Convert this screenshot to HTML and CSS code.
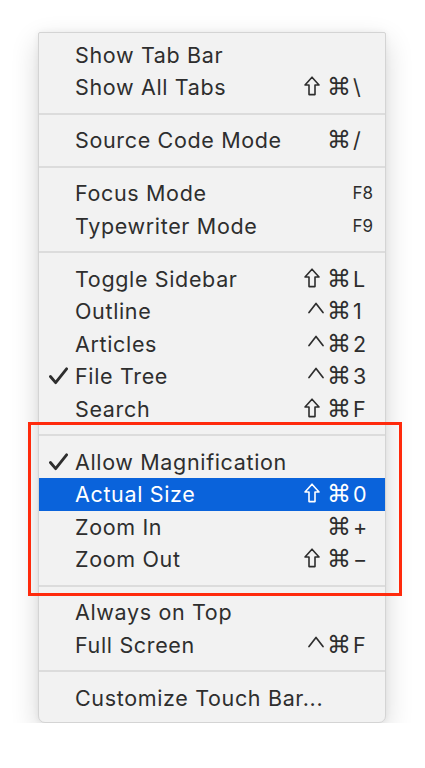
FILE: index.html
```html
<!DOCTYPE html>
<html>
<head>
<meta charset="utf-8">
<link rel="stylesheet" href="styles.css">
</head>
<body>
<div class="menu">
  <div class="row"><span class="label">Show Tab Bar</span></div>
  <div class="row"><span class="label">Show All Tabs</span><span class="sc"><span class="mods"><svg class="shift" viewBox="0 0 16 20"><path d="M8 1.2 L15 9 H11 V18.6 H5 V9 H1 Z" fill="none" stroke="currentColor" stroke-width="1.6" stroke-linejoin="round"/></svg><span class="m">⌘</span></span><span class="key">\</span></span></div>
  <div class="sep"></div>
  <div class="row"><span class="label">Source Code Mode</span><span class="sc"><span class="mods"><span class="m">⌘</span></span><span class="key">/</span></span></div>
  <div class="sep"></div>
  <div class="row"><span class="label">Focus Mode</span><span class="fkey">F8</span></div>
  <div class="row"><span class="label">Typewriter Mode</span><span class="fkey">F9</span></div>
  <div class="sep"></div>
  <div class="row"><span class="label">Toggle Sidebar</span><span class="sc"><span class="mods"><svg class="shift" viewBox="0 0 16 20"><path d="M8 1.2 L15 9 H11 V18.6 H5 V9 H1 Z" fill="none" stroke="currentColor" stroke-width="1.6" stroke-linejoin="round"/></svg><span class="m">⌘</span></span><span class="key">L</span></span></div>
  <div class="row"><span class="label">Outline</span><span class="sc"><span class="mods"><svg class="ctrl" viewBox="0 0 16 20"><path d="M1 12.5 L8 3.5 L15 12.5" fill="none" stroke="currentColor" stroke-width="1.7" stroke-linecap="round" stroke-linejoin="round"/></svg><span class="m">⌘</span></span><span class="key">1</span></span></div>
  <div class="row"><span class="label">Articles</span><span class="sc"><span class="mods"><svg class="ctrl" viewBox="0 0 16 20"><path d="M1 12.5 L8 3.5 L15 12.5" fill="none" stroke="currentColor" stroke-width="1.7" stroke-linecap="round" stroke-linejoin="round"/></svg><span class="m">⌘</span></span><span class="key">2</span></span></div>
  <div class="row"><svg class="check" viewBox="0 0 20 18"><path d="M1.5 9.5 L7 16 L18.5 1.5" fill="none" stroke="currentColor" stroke-width="3" stroke-linecap="round" stroke-linejoin="round"/></svg><span class="label">File Tree</span><span class="sc"><span class="mods"><svg class="ctrl" viewBox="0 0 16 20"><path d="M1 12.5 L8 3.5 L15 12.5" fill="none" stroke="currentColor" stroke-width="1.7" stroke-linecap="round" stroke-linejoin="round"/></svg><span class="m">⌘</span></span><span class="key">3</span></span></div>
  <div class="row"><span class="label">Search</span><span class="sc"><span class="mods"><svg class="shift" viewBox="0 0 16 20"><path d="M8 1.2 L15 9 H11 V18.6 H5 V9 H1 Z" fill="none" stroke="currentColor" stroke-width="1.6" stroke-linejoin="round"/></svg><span class="m">⌘</span></span><span class="key">F</span></span></div>
  <div class="group">
    <div class="sep"></div>
    <div class="row"><svg class="check" viewBox="0 0 20 18"><path d="M1.5 9.5 L7 16 L18.5 1.5" fill="none" stroke="currentColor" stroke-width="3" stroke-linecap="round" stroke-linejoin="round"/></svg><span class="label">Allow Magnification</span></div>
    <div class="row active"><span class="label">Actual Size</span><span class="sc"><span class="mods"><svg class="shift" viewBox="0 0 16 20"><path d="M8 1.2 L15 9 H11 V18.6 H5 V9 H1 Z" fill="none" stroke="currentColor" stroke-width="1.6" stroke-linejoin="round"/></svg><span class="m">⌘</span></span><span class="key">0</span></span></div>
    <div class="row"><span class="label">Zoom In</span><span class="sc"><span class="mods"><span class="m">⌘</span></span><span class="key">+</span></span></div>
    <div class="row"><span class="label">Zoom Out</span><span class="sc"><span class="mods"><svg class="shift" viewBox="0 0 16 20"><path d="M8 1.2 L15 9 H11 V18.6 H5 V9 H1 Z" fill="none" stroke="currentColor" stroke-width="1.6" stroke-linejoin="round"/></svg><span class="m">⌘</span></span><span class="key">−</span></span></div>
    <div class="sep"></div>
  </div>
  <div class="row"><span class="label">Always on Top</span></div>
  <div class="row"><span class="label">Full Screen</span><span class="sc"><span class="mods"><svg class="ctrl" viewBox="0 0 16 20"><path d="M1 12.5 L8 3.5 L15 12.5" fill="none" stroke="currentColor" stroke-width="1.7" stroke-linecap="round" stroke-linejoin="round"/></svg><span class="m">⌘</span></span><span class="key">F</span></span></div>
  <div class="sep"></div>
  <div class="row"><span class="label">Customize Touch Bar...</span></div>
</div>
</body>
</html>
```

FILE: styles.css
```css
html, body {
  margin: 0;
  padding: 0;
  background: #ffffff;
}

body {
  font-family: Inter, "Noto Sans", "DejaVu Sans", sans-serif;
  color: #2e2e2e;
}

.menu {
  box-sizing: border-box;
  margin: 32px 0 0 38px;
  width: 348px;
  padding: 5.5px 0 7.5px;
  background: #f2f2f2;
  border: 1px solid #d4d4d4;
  border-radius: 2px 2px 7px 7px;
  box-shadow: 0 10px 28px rgba(0, 0, 0, 0.16), 0 0 6px rgba(0, 0, 0, 0.06);
  position: relative;
}

.row {
  position: relative;
  display: flex;
  align-items: center;
  height: 32.5px;
  padding: 0 12px 0 36px;
  font-size: 21.5px;
  letter-spacing: 0.65px;
}

.label {
  flex: 1;
  white-space: nowrap;
}

.row.active {
  background: #0a63db;
  color: #ffffff;
}

.check {
  position: absolute;
  left: 10px;
  top: 7px;
  width: 19px;
  height: 18px;
  color: #2e2e2e;
}

.sc {
  display: flex;
  align-items: center;
  letter-spacing: 0;
}

.mods {
  display: flex;
  align-items: center;
  justify-content: flex-end;
  gap: 7px;
  font-family: "DejaVu Sans", sans-serif;
  font-size: 24px;
}

.m {
  line-height: 1;
}

.ctrl {
  width: 16px;
  height: 20px;
  margin-right: -4px;
  position: relative;
  top: -1px;
}

.shift {
  width: 16px;
  height: 20px;
  position: relative;
  top: -1px;
}

.key {
  width: 20px;
  margin-left: 2px;
  font-family: Inter, "DejaVu Sans", sans-serif;
}

.fkey {
  font-size: 17px;
  letter-spacing: 0;
}

.sep {
  height: 20.5px;
  display: flex;
  align-items: center;
}

.sep::before {
  content: "";
  display: block;
  width: 100%;
  height: 2px;
  background: #dcdcdc;
}

.group {
  position: relative;
}

.group::after {
  content: "";
  position: absolute;
  top: -3.5px;
  bottom: 0;
  left: -11px;
  right: -17px;
  border: 3px solid #ff2a0c;
  pointer-events: none;
}
```
